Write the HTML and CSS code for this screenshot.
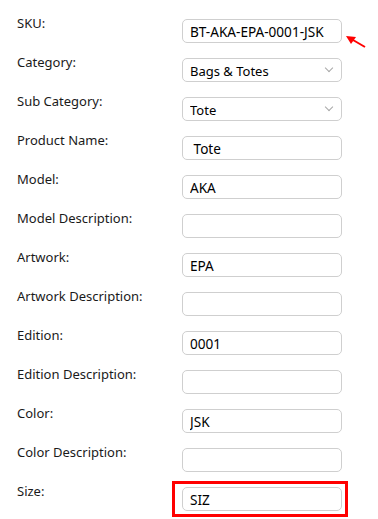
FILE: index.html
```html
<!DOCTYPE html>
<html lang="en">
<head>
<meta charset="UTF-8">
<meta name="viewport" content="width=device-width, initial-scale=1.0">
<title>Product SKU</title>
<link rel="stylesheet" href="styles.css">
</head>
<body>

  <form class="sku-form" id="sku-form">
      <label class="field-label" for="sku">SKU:</label>
      <div class="field">
          <input type="text" id="sku" value="BT-AKA-EPA-0001-JSK">
          <svg class="pointer-arrow" width="24" height="16" viewBox="0 0 24 16">
              <path d="M21 12 L9 5" stroke="#f00" stroke-width="2" fill="none"/>
              <path d="M2 1 L12 2 L7 9 Z" fill="#f00"/>
          </svg>
      </div>

      <label class="field-label" for="category">Category:</label>
      <div class="field select-wrap">
          <select id="category">
              <option>Bags &amp; Totes</option>
          </select>
      </div>

      <label class="field-label" for="sub-category">Sub Category:</label>
      <div class="field select-wrap">
          <select id="sub-category">
              <option>Tote</option>
          </select>
      </div>

      <label class="field-label" for="product-name">Product Name:</label>
      <div class="field"><input type="text" id="product-name" value=" Tote"></div>

      <label class="field-label" for="model">Model:</label>
      <div class="field"><input type="text" id="model" value="AKA"></div>

      <label class="field-label" for="model-desc">Model Description:</label>
      <div class="field"><input type="text" id="model-desc"></div>

      <label class="field-label" for="artwork">Artwork:</label>
      <div class="field"><input type="text" id="artwork" value="EPA"></div>

      <label class="field-label" for="artwork-desc">Artwork Description:</label>
      <div class="field"><input type="text" id="artwork-desc"></div>

      <label class="field-label" for="edition">Edition:</label>
      <div class="field"><input type="text" id="edition" value="0001"></div>

      <label class="field-label" for="edition-desc">Edition Description:</label>
      <div class="field"><input type="text" id="edition-desc"></div>

      <label class="field-label" for="color">Color:</label>
      <div class="field"><input type="text" id="color" value="JSK"></div>

      <label class="field-label" for="color-desc">Color Description:</label>
      <div class="field"><input type="text" id="color-desc"></div>

      <label class="field-label" for="size">Size:</label>
      <div class="field highlight">
          <input type="text" id="size" value="SIZ">
      </div>
  </form>

</body>
</html>
```

FILE: styles.css
```css
body {
  margin: 0;
  background: #FFF;
}

.sku-form {
  display: grid;
  grid-template-columns: 165px 160px;
  grid-auto-rows: 24px;
  row-gap: 15px;
  padding: 19px 0 8px 17px;
}

.field-label {
  font-family: "Noto Sans", sans-serif;
  font-size: 13px;
  line-height: 16px;
  color: #1a1a1a;
  margin-top: -4px;
}

.field {
  position: relative;
}

.field input,
.field select {
  display: block;
  box-sizing: border-box;
  width: 160px;
  height: 24px;
  margin: 0;
  padding: 1px 7px 0;
  border: 1px solid #CFCFCF;
  border-radius: 5px;
  background: #FFF;
  font-family: "Noto Sans", sans-serif;
  font-size: 13.6px;
  color: #000;
  outline: none;
}

.field select {
  appearance: none;
  -webkit-appearance: none;
  font-size: 13px;
}

.select-wrap::after {
  content: "";
  position: absolute;
  right: 10px;
  top: 7px;
  width: 5px;
  height: 5px;
  border-right: 1px solid #A8A8A8;
  border-bottom: 1px solid #A8A8A8;
  transform: rotate(45deg);
  pointer-events: none;
}

.pointer-arrow {
  position: absolute;
  left: 162px;
  top: 16px;
}

.highlight::before {
  content: "";
  position: absolute;
  top: -6px;
  left: -10px;
  right: -6px;
  bottom: -6px;
  border: 3px solid #F00;
  pointer-events: none;
}
```
